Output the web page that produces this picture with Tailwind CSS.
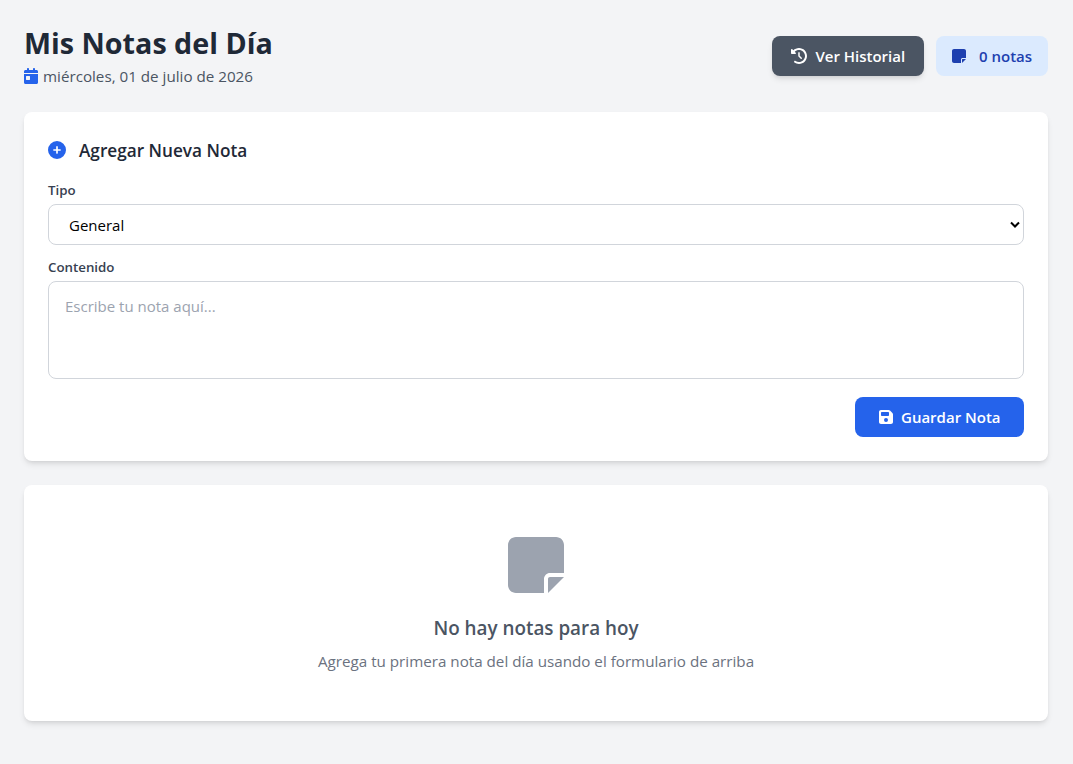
<!DOCTYPE html>
<html lang="es">
<head>
<meta charset="utf-8">
<title>Mis Notas del Día</title>
<script src="https://cdn.jsdelivr.net/npm/@tailwindcss/browser@4"></script>
</head>
<body class="min-h-screen bg-[#f3f4f6] p-6 pr-[25px] font-['Segoe_UI','Open_Sans',sans-serif] text-[15.2px] leading-6 text-[#1f2937]">
<header class="mb-6 flex h-16 items-center justify-between">
  <div>
    <h1 class="mb-0.5 text-[28.7px] leading-[38px] font-bold whitespace-nowrap">Mis Notas del Día</h1>
    <p class="flex h-6 items-center gap-[5px] whitespace-nowrap text-[#4b5563]">
      <svg class="h-4 w-3.5 fill-[#2563eb]" viewBox="0 0 448 512"><path d="M128 0c17.7 0 32 14.3 32 32V64H288V32c0-17.7 14.3-32 32-32s32 14.3 32 32V64h48c26.5 0 48 21.5 48 48v48H0V112C0 85.5 21.5 64 48 64H96V32c0-17.7 14.3-32 32-32zM0 192H448V464c0 26.5-21.5 48-48 48H48c-26.5 0-48-21.5-48-48V192zm80 64c-8.8 0-16 7.2-16 16v96c0 8.8 7.2 16 16 16h96c8.8 0 16-7.2 16-16V272c0-8.8-7.2-16-16-16H80z"/></svg>
      <span>miércoles, 01 de julio de 2026</span>
    </p>
  </div>
  <div class="flex gap-3 text-[15px] font-semibold whitespace-nowrap">
    <button class="flex h-10 w-[152px] items-center gap-2 rounded-lg bg-[#4b5563] pl-[19.4px] text-white shadow-md">
      <svg class="h-4 w-4 fill-white" viewBox="0 0 512 512"><path d="M75 75L41 41C25.9 25.9 0 36.6 0 57.9V168c0 13.3 10.7 24 24 24H134.1c21.4 0 32.1-25.9 17-41l-30.8-30.8C155 85.5 203 64 256 64c106 0 192 86 192 192s-86 192-192 192c-40.8 0-78.6-12.7-109.7-34.4c-14.5-10.1-34.4-6.6-44.6 7.9s-6.6 34.4 7.9 44.6C151.2 495 201.7 512 256 512c141.4 0 256-114.6 256-256S397.4 0 256 0C185.3 0 121.3 28.7 75 75zm181 53c-13.3 0-24 10.7-24 24V256c0 6.4 2.5 12.5 7 17l72 72c9.4 9.4 24.6 9.4 33.9 0s9.4-24.6 0-33.9l-65-65V152c0-13.3-10.7-24-24-24z"/></svg>
      <span>Ver Historial</span>
    </button>
    <div class="flex h-10 w-28 items-center gap-[12.6px] rounded-lg bg-[#dbeafe] pl-[16.4px] text-[#1e40af]">
      <svg class="h-4 w-3.5 fill-[#1e40af]" viewBox="0 0 448 512"><path d="M64 32C28.7 32 0 60.7 0 96V416c0 35.3 28.7 64 64 64H288V368c0-26.5 21.5-48 48-48H448V96c0-35.3-28.7-64-64-64H64zM448 352H336c-8.8 0-16 7.2-16 16V480l128-128z"/></svg>
      <span>0 notas</span>
    </div>
  </div>
</header>

<section class="mb-6 h-[349px] rounded-lg bg-white p-6 shadow-md">
  <h2 class="mb-4 flex h-7 items-center gap-[13px] text-[17.2px] leading-7 font-semibold">
    <svg class="h-[18px] w-[18px] fill-[#2563eb]" viewBox="0 0 512 512"><path d="M256 512A256 256 0 1 0 256 0a256 256 0 1 0 0 512zM232 344V280H168c-13.3 0-24-10.7-24-24s10.7-24 24-24h64V168c0-13.3 10.7-24 24-24s24 10.7 24 24v64h64c13.3 0 24 10.7 24 24s-10.7 24-24 24H280v64c0 13.3-10.7 24-24 24s-24-10.7-24-24z"/></svg>
    <span class="pt-0.5">Agregar Nueva Nota</span>
  </h2>
  <label class="mb-1 block text-[13.3px] leading-5 font-semibold text-[#374151]">Tipo</label>
  <div class="mb-3 flex h-[41px] items-center justify-between rounded-lg border border-[#d1d5db] pr-[3px] pl-5 text-[15px] text-black">
    <span>General</span>
    <svg class="h-2.5 w-2.5 fill-none stroke-black stroke-2" viewBox="0 0 10 10"><path d="M1 2.5l4 4 4-4"/></svg>
  </div>
  <label class="mb-1 block text-[13.3px] leading-5 font-semibold text-[#374151]">Contenido</label>
  <div class="mb-[18px] h-[98px] rounded-lg border border-[#d1d5db] px-4 py-3 text-[15px] leading-6 text-[#9ca3af]">Escribe tu nota aquí...</div>
  <div class="flex justify-end">
    <button class="flex h-10 w-[169px] items-center gap-2 rounded-lg bg-[#2563eb] pl-6 text-[15px] font-semibold whitespace-nowrap text-white">
      <svg class="h-4 w-3.5 fill-white" viewBox="0 0 448 512"><path d="M64 32C28.7 32 0 60.7 0 96V416c0 35.3 28.7 64 64 64H384c35.3 0 64-28.7 64-64V173.3c0-17-6.7-33.3-18.7-45.3L352 50.7C340 38.7 323.7 32 306.7 32H64zm0 96c0-17.7 14.3-32 32-32H288c17.7 0 32 14.3 32 32v64c0 17.7-14.3 32-32 32H96c-17.7 0-32-14.3-32-32V128zM224 288a64 64 0 1 1 0 128 64 64 0 1 1 0-128z"/></svg>
      <span>Guardar Nota</span>
    </button>
  </div>
</section>

<section class="flex h-[236px] flex-col items-center rounded-lg bg-white pt-12 whitespace-nowrap shadow-md">
  <svg class="mb-[17px] h-16 w-14 fill-[#9ca3af]" viewBox="0 0 448 512"><path d="M64 32C28.7 32 0 60.7 0 96V416c0 35.3 28.7 64 64 64H288V368c0-26.5 21.5-48 48-48H448V96c0-35.3-28.7-64-64-64H64zM448 352H336c-8.8 0-16 7.2-16 16V480l128-128z"/></svg>
  <h3 class="mb-[7px] text-[18.85px] leading-7 font-semibold text-[#4b5563]">No hay notas para hoy</h3>
  <p class="text-[#6b7280]">Agrega tu primera nota del día usando el formulario de arriba</p>
</section>
</body>
</html>
